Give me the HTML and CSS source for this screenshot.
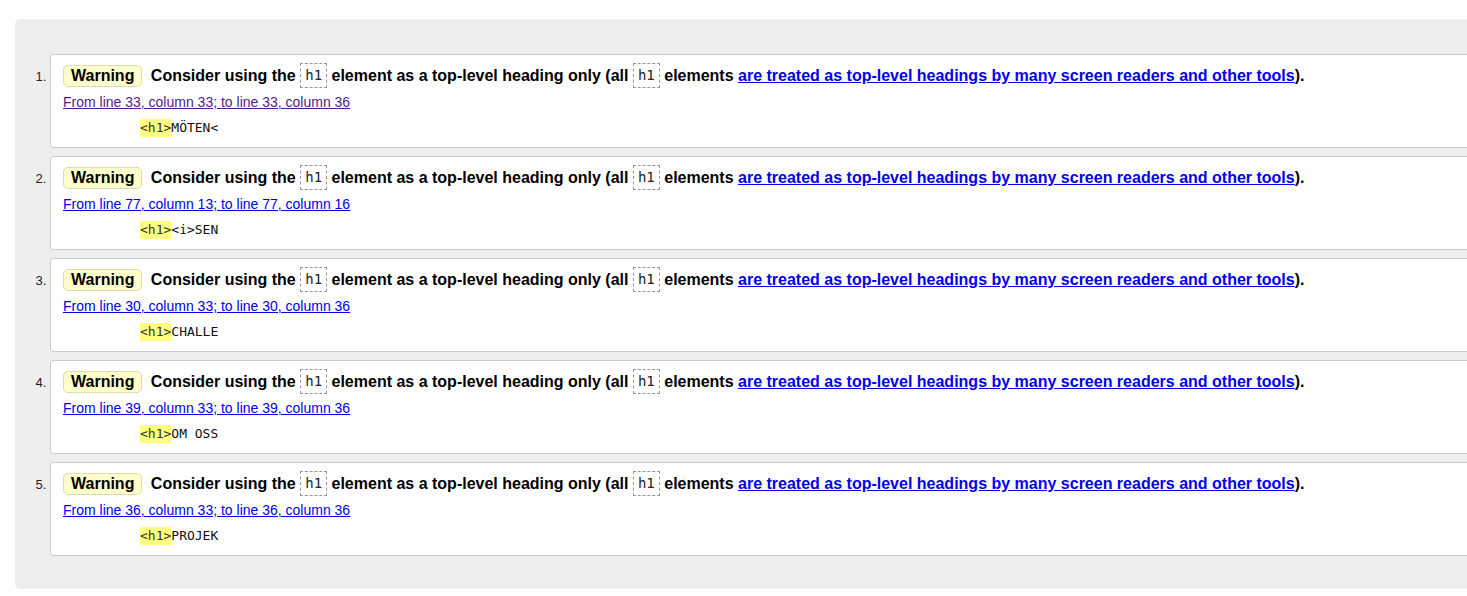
FILE: index.html
```html
<!DOCTYPE html>
<html lang="en">
<head>
<meta charset="utf-8">
<title>Validator results</title>
<link rel="stylesheet" href="styles.css">
</head>
<body>
<div class="results">
  <ol class="messages">
    <li class="msg">
      <p class="msg-line"><span class="badge">Warning</span> <span class="text">Consider using the <code class="el">h1</code> element as a top-level heading only (all <code class="el">h1</code> elements <a class="ref" href="#">are treated as top-level headings by many screen readers and other tools</a>).</span></p>
      <p class="location"><a class="loc visited" href="#">From line 33, column 33; to line 33, column 36</a></p>
      <p class="extract"><code><mark>&lt;h1&gt;</mark>MÖTEN&lt;</code></p>
    </li>
    <li class="msg">
      <p class="msg-line"><span class="badge">Warning</span> <span class="text">Consider using the <code class="el">h1</code> element as a top-level heading only (all <code class="el">h1</code> elements <a class="ref" href="#">are treated as top-level headings by many screen readers and other tools</a>).</span></p>
      <p class="location"><a class="loc" href="#">From line 77, column 13; to line 77, column 16</a></p>
      <p class="extract"><code><mark>&lt;h1&gt;</mark>&lt;i&gt;SEN</code></p>
    </li>
    <li class="msg">
      <p class="msg-line"><span class="badge">Warning</span> <span class="text">Consider using the <code class="el">h1</code> element as a top-level heading only (all <code class="el">h1</code> elements <a class="ref" href="#">are treated as top-level headings by many screen readers and other tools</a>).</span></p>
      <p class="location"><a class="loc" href="#">From line 30, column 33; to line 30, column 36</a></p>
      <p class="extract"><code><mark>&lt;h1&gt;</mark>CHALLE</code></p>
    </li>
    <li class="msg">
      <p class="msg-line"><span class="badge">Warning</span> <span class="text">Consider using the <code class="el">h1</code> element as a top-level heading only (all <code class="el">h1</code> elements <a class="ref" href="#">are treated as top-level headings by many screen readers and other tools</a>).</span></p>
      <p class="location"><a class="loc" href="#">From line 39, column 33; to line 39, column 36</a></p>
      <p class="extract"><code><mark>&lt;h1&gt;</mark>OM OSS</code></p>
    </li>
    <li class="msg">
      <p class="msg-line"><span class="badge">Warning</span> <span class="text">Consider using the <code class="el">h1</code> element as a top-level heading only (all <code class="el">h1</code> elements <a class="ref" href="#">are treated as top-level headings by many screen readers and other tools</a>).</span></p>
      <p class="location"><a class="loc" href="#">From line 36, column 33; to line 36, column 36</a></p>
      <p class="extract"><code><mark>&lt;h1&gt;</mark>PROJEK</code></p>
    </li>
  </ol>
</div>
</body>
</html>
```

FILE: styles.css
```css
html {
  overflow: hidden;
}
body {
  margin: 0;
  background: #fff;
  font-family: "Liberation Sans", Arial, sans-serif;
  color: #000;
}
.results {
  margin: 19px 0 0 15px;
  width: 1500px;
  background: #eeeeee;
  border-radius: 5px;
  padding: 35px 0 33px 35px;
}
.messages {
  margin: 0;
  padding: 0;
  list-style: decimal outside;
}
.msg {
  background: #fff;
  border: 1px solid #cccccc;
  border-radius: 3px;
  padding: 7px 12px 11px;
  margin-bottom: 8px;
}
.msg:last-child {
  margin-bottom: 0;
}
.msg::marker {
  font-size: 13px;
  color: #222;
}
.msg-line {
  margin: 0;
  font-size: 16px;
  font-weight: bold;
  line-height: 27px;
  white-space: nowrap;
}
.badge {
  display: inline-block;
  background: #ffffcc;
  border: 1px solid #dddbb0;
  border-radius: 5px;
  padding: 0 7px;
  line-height: 20px;
  margin-right: 4px;
}
.el {
  display: inline-block;
  font-family: "DejaVu Sans Mono", monospace;
  font-size: 14px;
  font-weight: normal;
  line-height: 17px;
  padding: 3px 4px;
  border: 1px dashed #999;
  color: #222;
  vertical-align: middle;
  margin-top: -2px;
}
.ref {
  color: #0000ee;
  text-decoration: underline;
}
.location {
  margin: 5px 0 0;
  font-size: 14px;
  line-height: 17px;
}
.loc {
  color: #0000ee;
}
.loc.visited {
  color: #551a8b;
}
.extract {
  margin: 8px 0 0 77px;
  font-size: 13px;
  line-height: 17px;
}
.extract code {
  font-family: "DejaVu Sans Mono", monospace;
  font-size: 13px;
  color: #111;
}
.extract mark {
  background: #ffff80;
  color: #333;
  padding: 1px 0 2px;
}
```
